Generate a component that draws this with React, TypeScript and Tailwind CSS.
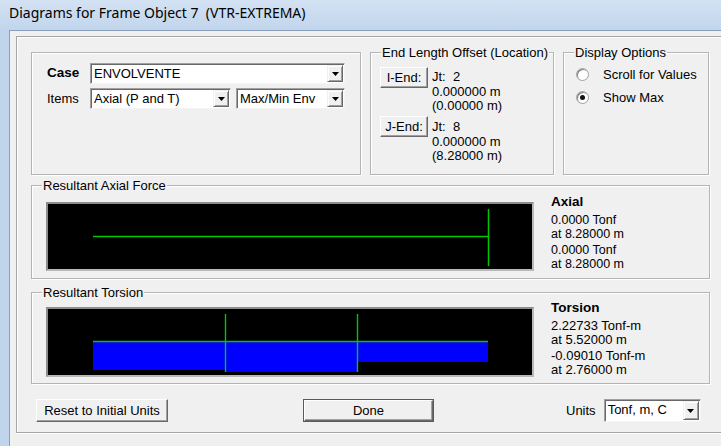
import React from "react";

type Kids = { children?: React.ReactNode; className?: string };

// Etched group box with an optional caption sitting on its top edge
function Group({ title, className = "", children }: Kids & { title?: string }) {
  return (
    <div
      className={`relative border border-[#b4b4b4] shadow-[inset_1px_1px_0_#ffffff,1px_1px_0_#ffffff] ${className}`}
    >
      {title && (
        <span className="absolute left-[10px] top-[-8px] bg-[#f0f0f0] px-[1px] leading-[15px] whitespace-nowrap">
          {title}
        </span>
      )}
      {children}
    </div>
  );
}

function Arrow() {
  return (
    <svg width="7" height="4" viewBox="0 0 7 4">
      <polygon points="0,0 7,0 3.5,4" fill="#000" />
    </svg>
  );
}

// Classic sunken drop-down box
function Combo({ value, className = "" }: { value: string; className?: string }) {
  return (
    <div
      className={`flex h-[21px] bg-white border border-t-[#a0a0a0] border-l-[#a0a0a0] border-r-[#f4f4f4] border-b-[#f4f4f4] p-[1px] shadow-[inset_1px_1px_0_#696969] ${className}`}
    >
      <span className="flex-1 pl-[2px] pt-[1px] leading-[16px] whitespace-nowrap overflow-hidden">
        {value}
      </span>
      <span className="flex w-[16px] h-full items-center justify-center bg-[#f0f0f0] border border-t-[#f0f0f0] border-l-[#f0f0f0] border-r-[#696969] border-b-[#696969] shadow-[inset_1px_1px_0_#ffffff,inset_-1px_-1px_0_#a0a0a0]">
        <Arrow />
      </span>
    </div>
  );
}

// Classic raised push button
function Btn({ children, className = "" }: Kids) {
  return (
    <button
      className={`flex items-center justify-center bg-[#f0f0f0] border border-t-[#ffffff] border-l-[#ffffff] border-r-[#696969] border-b-[#696969] shadow-[inset_-1px_-1px_0_#a0a0a0] leading-[15px] ${className}`}
    >
      {children}
    </button>
  );
}

function Radio({ checked, label }: { checked?: boolean; label: string }) {
  return (
    <div className="flex items-center h-[13px]">
      <span className="flex w-[13px] h-[13px] items-center justify-center rounded-full bg-white border border-[#a0a0a0] shadow-[inset_1px_1px_0_#808080]">
        {checked && <span className="w-[5px] h-[5px] rounded-full bg-[#111111]" />}
      </span>
      <span className="ml-[14px] leading-[15px] whitespace-nowrap">{label}</span>
    </div>
  );
}

// Black plot area holding an SVG diagram
function Plot({ children, className = "" }: Kids) {
  return (
    <div
      className={`w-[488px] shrink-0 bg-black border-2 border-t-[#8c8c8c] border-l-[#8c8c8c] border-r-[#b8b8b8] border-b-[#b8b8b8] ${className}`}
    >
      <svg width="484" height="66" viewBox="0 0 484 66" className="block">
        {children}
      </svg>
    </div>
  );
}

const G = "#00c800";

export default function App() {
  return (
    <div className="w-[721px] h-[446px] overflow-hidden flex flex-col bg-[#c0d4eb] text-black text-[13px] font-['Liberation_Sans',Arial,sans-serif]">
      {/* caption bar */}
      <div className="h-[30px] shrink-0 pl-[9px] pt-[3px] bg-gradient-to-b from-[#d3e2f3] to-[#c1d5ec] text-[14px] leading-[19px] whitespace-pre font-['Noto_Sans',sans-serif]">
        Diagrams for Frame Object 7  (VTR-EXTREMA)
      </div>

      <div className="flex-1 flex pl-[9px]">
        <div className="flex-1 bg-[#f0f0f0] border-l border-t border-[#8a9fbb] pl-[6px] pt-[5px]">
          <div className="w-[720px] border-l border-t border-b border-[#a5a5a5] shadow-[inset_1px_1px_0_#ffffff,0_1px_0_#ffffff] pl-[14px] pt-[15px] pb-[10px]">
            {/* top row: case selection, end offsets, display options */}
            <div className="flex h-[123px]">
              <Group className="w-[330px] h-full pl-[15px] pt-[10px]">
                <div className="flex items-center">
                  <span className="w-[43px] font-bold text-[13.5px]">Case</span>
                  <Combo value="ENVOLVENTE" className="w-[255px]" />
                </div>
                <div className="flex items-center mt-[4px]">
                  <span className="w-[43px]">Items</span>
                  <Combo value="Axial (P and T)" className="w-[141px]" />
                  <Combo value="Max/Min Env" className="w-[109px] ml-[5px]" />
                </div>
              </Group>

              <Group title="End Length Offset (Location)" className="w-[184px] h-full ml-[9px] pl-[9px] pt-[14px]">
                <div className="flex h-[49px]">
                  <Btn className="w-[48px] h-[21px]">I-End:</Btn>
                  <div className="ml-[4px] mt-[3px] leading-[14.5px] whitespace-pre">
                    <div>Jt:  2</div>
                    <div>0.000000 m</div>
                    <div>(0.00000 m)</div>
                  </div>
                </div>
                <div className="flex">
                  <Btn className="w-[48px] h-[21px]">J-End:</Btn>
                  <div className="ml-[4px] mt-[4px] leading-[14.5px] whitespace-pre">
                    <div>Jt:  8</div>
                    <div>0.000000 m</div>
                    <div>(8.28000 m)</div>
                  </div>
                </div>
              </Group>

              <Group title="Display Options" className="w-[146px] h-full ml-[9px] pl-[12px] pt-[15px]">
                <Radio label="Scroll for Values" />
                <div className="mt-[10px]">
                  <Radio checked label="Show Max" />
                </div>
              </Group>
            </div>

            {/* axial force diagram */}
            <Group title="Resultant Axial Force" className="w-[679px] h-[94px] mt-[10px] flex pl-[14px] pt-[8px]">
              <Plot className="h-[69px] mt-[8px]">
                <line x1="45" y1="32.5" x2="440" y2="32.5" stroke={G} strokeWidth="1.5" />
                <line x1="440.5" y1="5" x2="440.5" y2="62" stroke={G} strokeWidth="1.5" />
              </Plot>
              <div className="ml-[17px] whitespace-nowrap">
                <div className="font-bold text-[13.5px] leading-[16px]">Axial</div>
                <div className="mt-[3px] text-[12.5px] leading-[14px]">
                  <div>0.0000 Tonf</div>
                  <div>at 8.28000 m</div>
                </div>
                <div className="mt-[2px] text-[12.5px] leading-[14px]">
                  <div>0.0000 Tonf</div>
                  <div>at 8.28000 m</div>
                </div>
              </div>
            </Group>

            {/* torsion diagram */}
            <Group title="Resultant Torsion" className="w-[679px] h-[92px] mt-[13px] flex pl-[14px] pt-[7px]">
              <Plot className="h-[70px] mt-[7px]">
                <rect x="45" y="32" width="132" height="29" fill="#0000ff" />
                <rect x="177" y="33" width="132" height="30" fill="#0000ff" />
                <rect x="309" y="33" width="131" height="20" fill="#0000ff" />
                <line x1="45" y1="32.5" x2="440" y2="32.5" stroke={G} strokeWidth="1.3" />
                <line x1="177.5" y1="5" x2="177.5" y2="63" stroke={G} strokeWidth="1.4" />
                <line x1="309.5" y1="5" x2="309.5" y2="63" stroke={G} strokeWidth="1.4" />
              </Plot>
              <div className="ml-[17px] whitespace-nowrap">
                <div className="font-bold text-[13.5px] leading-[16px]">Torsion</div>
                <div className="mt-[3px] leading-[14px]">
                  <div>2.22733 Tonf-m</div>
                  <div>at 5.52000 m</div>
                </div>
                <div className="mt-[2px] leading-[14px]">
                  <div>-0.09010 Tonf-m</div>
                  <div>at 2.76000 m</div>
                </div>
              </div>
            </Group>

            {/* dialog buttons */}
            <div className="flex items-center mt-[15px] h-[23px]">
              <Btn className="w-[132px] h-[23px] ml-[5px]">Reset to Initial Units</Btn>
              <div className="ml-[135px] border border-[#5a5a5a]">
                <Btn className="w-[129px] h-[21px]">Done</Btn>
              </div>
              <span className="ml-[132px]">Units</span>
              <Combo value="Tonf, m, C" className="w-[97px] h-[23px] ml-[8px]" />
            </div>
          </div>
        </div>
      </div>
    </div>
  );
}
